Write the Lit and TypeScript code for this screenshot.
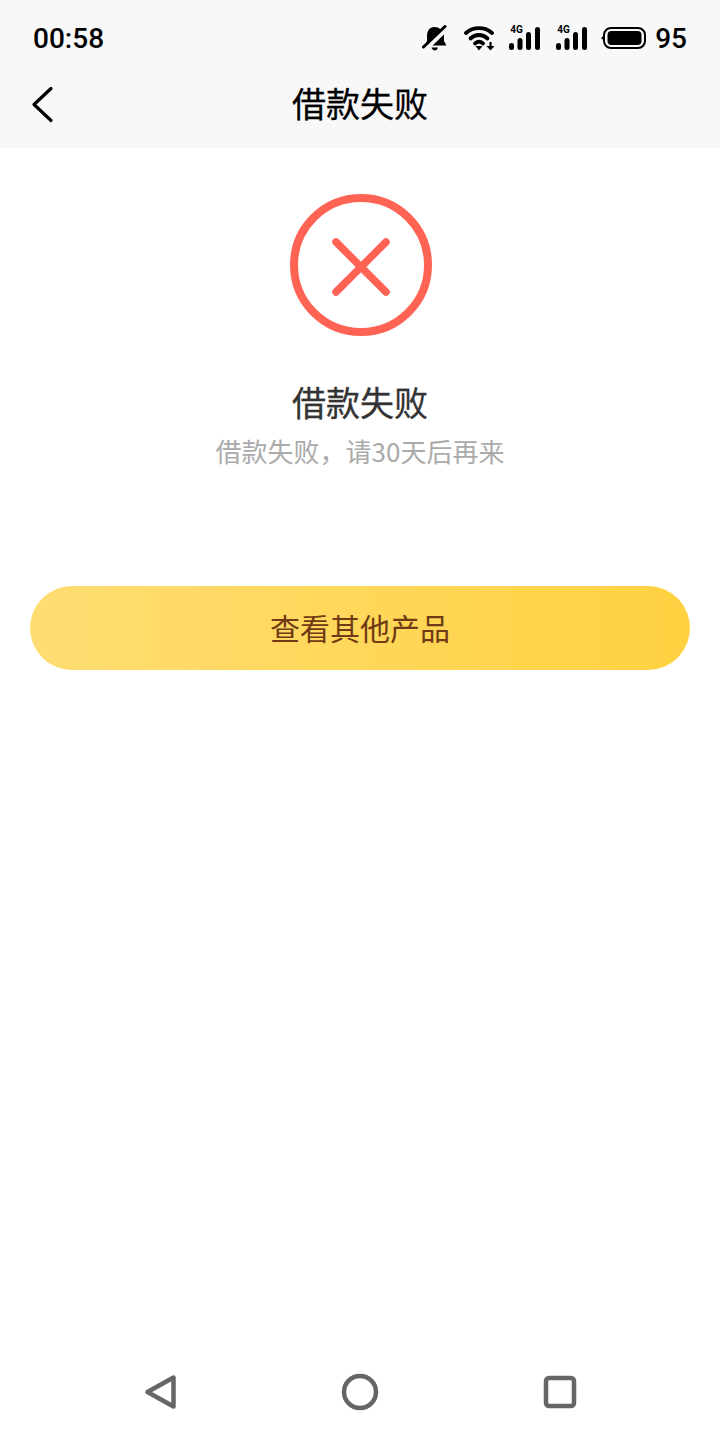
import { LitElement, css, html } from "lit";
import { customElement } from "lit/decorators.js";

const signal = html`
  <span class="signal">
    <span class="net">4G</span>
    <svg width="31" height="24" viewBox="0 0 31 24">
      <g fill="none" stroke="#000" stroke-width="5" stroke-linecap="round">
        <path d="M2.500 19.500v2" />
        <path d="M11 14.500v7" />
        <path d="M19.500 8.500v13" />
        <path d="M28.500 3.500v18" />
      </g>
    </svg>
  </span>
`;

@customElement("app-root")
export class AppRoot extends LitElement {
  static styles = css`
    :host {
      display: block;
      height: 1440px;
      background: #fff;
      font-family: "Noto Sans CJK SC", "Liberation Sans", sans-serif;
    }
    .page {
      display: flex;
      flex-direction: column;
      height: 1440px;
    }
    .top {
      background: #f8f8f8;
      height: 148px;
      flex: none;
    }
    .status {
      height: 72px;
      padding: 2px 33px 0;
      display: flex;
      align-items: center;
      font-family: Roboto, "Liberation Sans", sans-serif;
      font-weight: 500;
      font-size: 28px;
      color: #000;
    }
    .time {
      flex: 1;
    }
    .icons {
      display: flex;
      align-items: center;
    }
    .icons svg {
      display: block;
    }
    .bell {
      margin-right: 16px;
    }
    .wifi {
      margin-right: 14px;
    }
    .signal {
      position: relative;
      display: block;
      width: 31px;
      height: 24px;
      margin-right: 16px;
    }
    .battery {
      margin-left: -2px;
    }
    .net {
      position: absolute;
      left: 1px;
      top: -1px;
      font-size: 10px;
      line-height: 10px;
      font-weight: 700;
    }
    .level {
      margin-left: 9px;
    }
    .nav {
      height: 58px;
      position: relative;
      display: flex;
      align-items: center;
      justify-content: center;
    }
    .back {
      position: absolute;
      left: 30px;
      top: 11px;
    }
    .nav-title {
      font-size: 34px;
      line-height: 56px;
      color: #000;
      -webkit-text-stroke: 0.3px #000;
    }
    .main {
      flex: 1;
      display: flex;
      flex-direction: column;
      align-items: center;
      padding: 46px 30px 0;
    }
    .mark {
      display: block;
      margin-left: 2px;
    }
    .title {
      margin-top: 38px;
      font-size: 34px;
      line-height: 56px;
      color: #333;
      -webkit-text-stroke: 0.3px #333;
    }
    .sub {
      margin-top: 2px;
      font-size: 26px;
      line-height: 38px;
      color: #aaa;
    }
    .action {
      margin-top: 116px;
      width: 100%;
      height: 84px;
      flex: none;
      border: none;
      border-radius: 42px;
      background: linear-gradient(90deg, #ffdd73, #ffd140);
      color: #6f3a14;
      font-family: inherit;
      font-size: 30px;
      padding: 0 0 2px;
    }
    .softkeys {
      height: 96px;
      flex: none;
      display: flex;
      align-items: center;
      justify-content: center;
      gap: 160px;
    }
    .softkeys svg {
      display: block;
    }
  `;

  render() {
    return html`
      <div class="page">
        <div class="top">
          <div class="status">
            <span class="time">00:58</span>
            <div class="icons">
              <svg class="bell" width="26" height="26" viewBox="0 0 26 26">
                <path d="M12.500 2C7 2 5 6.500 5 11v5l-2 4.500h21.500L22 16v-5C22 6.500 18 2 12.500 2z" fill="#000" />
                <path d="M9.500 22.500h6.500c-.5 2-2 3-3.250 3s-2.750-1-3.250-3z" fill="#000" />
                <path d="M3 24.500L26 2" stroke="#f8f8f8" stroke-width="5" />
                <path d="M1.500 22L23 1.500" stroke="#000" stroke-width="3" stroke-linecap="round" />
              </svg>
              <svg class="wifi" width="31" height="26" viewBox="0 0 31 26">
                <g fill="none" stroke="#000" stroke-width="3.800" stroke-linecap="round">
                  <path d="M2 8C9 1.500 21 1.500 28 8" />
                  <path d="M6.500 13.500C11.500 8.800 18.500 8.800 23.500 13.500" />
                  <path d="M11 18.500c2.500-2.300 5.500-2.300 8 0" />
                </g>
                <path d="M11.500 21h7l-3.500 4.500z" fill="#000" />
                <path d="M26.500 17v5" stroke="#000" stroke-width="2.200" />
                <path d="M22.500 21h8l-4 4.500z" fill="#000" />
              </svg>
              ${signal} ${signal}
              <svg class="battery" width="45" height="22" viewBox="0 0 45 22">
                <path d="M4 7.500L0 11l4 3.500z" fill="#000" />
                <rect x="3" y="1" width="41" height="20" rx="7" fill="none" stroke="#000" stroke-width="2" />
                <rect x="6.500" y="4" width="34" height="14" rx="4" fill="#000" />
              </svg>
              <span class="level">95</span>
            </div>
          </div>
          <div class="nav">
            <svg class="back" width="24" height="40" viewBox="0 0 24 40">
              <path d="M21 3.500L4 19.500 21 35.500" fill="none" stroke="#000" stroke-width="3.200" stroke-linecap="round" stroke-linejoin="round" />
            </svg>
            <span class="nav-title">借款失败</span>
          </div>
        </div>
        <div class="main">
          <svg class="mark" width="142" height="142" viewBox="0 0 142 142">
            <circle cx="71" cy="71" r="67" fill="none" stroke="#ff6354" stroke-width="8" />
            <path d="M46 48L96 98M96 48L46 98" fill="none" stroke="#ff6354" stroke-width="7.500" stroke-linecap="round" />
          </svg>
          <div class="title">借款失败</div>
          <div class="sub">借款失败，请30天后再来</div>
          <button class="action">查看其他产品</button>
        </div>
        <div class="softkeys">
          <svg width="40" height="40" viewBox="0 0 40 40">
            <path d="M7.500 20L33.500 5.500V34.500z" fill="none" stroke="#666" stroke-width="4.500" stroke-linejoin="round" />
          </svg>
          <svg width="40" height="40" viewBox="0 0 40 40">
            <circle cx="20" cy="20" r="16" fill="none" stroke="#666" stroke-width="4.500" />
          </svg>
          <svg width="40" height="40" viewBox="0 0 40 40">
            <rect x="6" y="6" width="28" height="28" rx="3" fill="none" stroke="#666" stroke-width="4.500" />
          </svg>
        </div>
      </div>
    `;
  }
}
